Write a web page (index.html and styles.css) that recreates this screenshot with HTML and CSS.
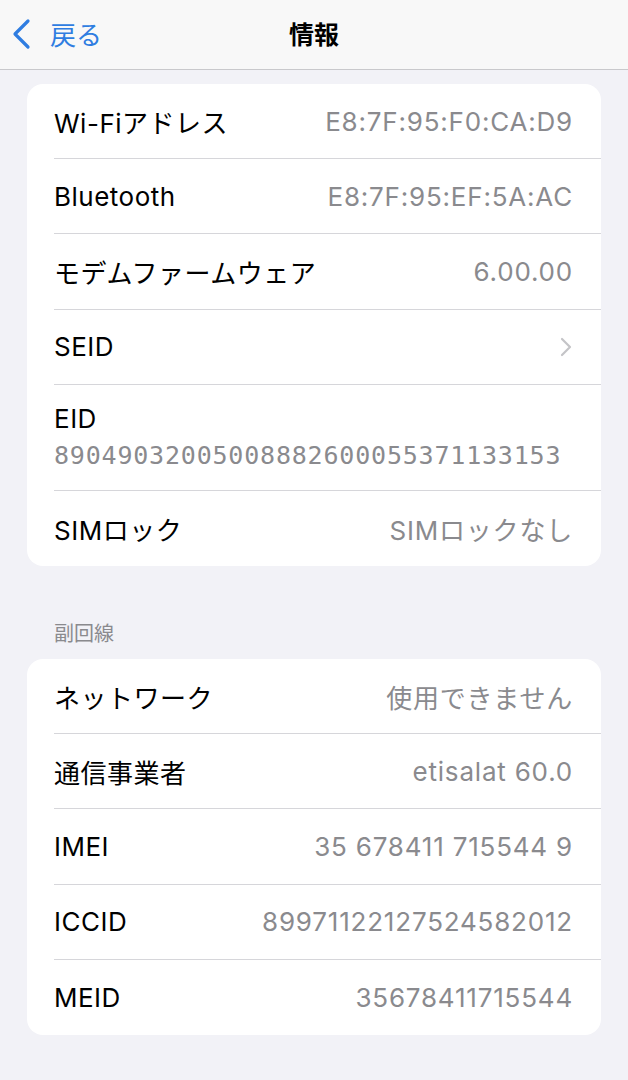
FILE: index.html
```html
<!DOCTYPE html>
<html lang="ja">
<head>
    <meta charset="UTF-8">
    <meta name="viewport" content="width=device-width, initial-scale=1.0">
    <title>情報</title>
    <link rel="stylesheet" href="styles.css">
</head>
<body>
    <div class="navbar">
        <div class="back">
            <svg class="back-icon" width="22" height="32" viewBox="0 0 22 32">
                <path d="M17 3 L4 16 L17 29" fill="none" stroke="#2f7de1" stroke-width="3.2" stroke-linecap="round" stroke-linejoin="round"/>
            </svg>
            <span>戻る</span>
        </div>
        <div class="title">情報</div>
    </div>

    <div class="content">
        <div class="card">
            <div class="row"><div class="row-inner"><span class="label">Wi-Fiアドレス</span><span class="value">E8:7F:95:F0:CA:D9</span></div></div>
            <div class="row"><div class="row-inner"><span class="label">Bluetooth</span><span class="value">E8:7F:95:EF:5A:AC</span></div></div>
            <div class="row"><div class="row-inner"><span class="label">モデムファームウェア</span><span class="value">6.00.00</span></div></div>
            <div class="row"><div class="row-inner"><span class="label">SEID</span>
                <svg class="chevron" width="12" height="20" viewBox="0 0 12 20"><path d="M2 2 L10 10 L2 18" fill="none" stroke="#c4c4c7" stroke-width="2.2" stroke-linecap="round" stroke-linejoin="round"/></svg>
            </div></div>
            <div class="row"><div class="row-inner stacked"><span class="label">EID</span><span class="value mono">89049032005008882600055371133153</span></div></div>
            <div class="row"><div class="row-inner"><span class="label">SIMロック</span><span class="value">SIMロックなし</span></div></div>
        </div>

        <div class="section-header">副回線</div>

        <div class="card">
            <div class="row"><div class="row-inner"><span class="label">ネットワーク</span><span class="value">使用できません</span></div></div>
            <div class="row"><div class="row-inner"><span class="label">通信事業者</span><span class="value">etisalat 60.0</span></div></div>
            <div class="row"><div class="row-inner"><span class="label">IMEI</span><span class="value">35 678411 715544 9</span></div></div>
            <div class="row"><div class="row-inner"><span class="label">ICCID</span><span class="value">89971122127524582012</span></div></div>
            <div class="row"><div class="row-inner"><span class="label">MEID</span><span class="value">35678411715544</span></div></div>
        </div>
    </div>
</body>
</html>
```

FILE: styles.css
```css
body {
    margin: 0;
    background-color: #f2f2f7;
    font-family: Inter, "Noto Sans CJK JP", sans-serif;
    color: #000;
}
.navbar {
    height: 70px;
    padding-bottom: 4px;
    box-sizing: border-box;
    background-color: #f8f8f8;
    border-bottom: 1px solid #c9c9cc;
    display: flex;
    align-items: center;
    justify-content: center;
    position: relative;
}
.back {
    position: absolute;
    left: 11px;
    top: 15px;
    display: flex;
    align-items: center;
    gap: 17px;
    color: #2f7de1;
    font-size: 26px;
}
.back-icon {
    display: block;
}
.title {
    font-size: 25px;
    font-weight: bold;
}
.content {
    padding: 14px 27px 40px;
}
.card {
    background-color: #fff;
    border-radius: 16px;
    overflow: hidden;
}
.row {
    padding-left: 27px;
}
.row-inner {
    min-height: 75.2px;
    padding-right: 28px;
    display: flex;
    align-items: center;
    justify-content: space-between;
    border-bottom: 1px solid #d6d6da;
    box-sizing: border-box;
}
.row:last-child .row-inner {
    border-bottom: none;
}
.row-inner.stacked {
    flex-direction: column;
    align-items: flex-start;
    justify-content: center;
    min-height: 106px;
    gap: 7px;
    padding-bottom: 2px;
}
.label {
    font-size: 26px;
    letter-spacing: 0.5px;
}
.value {
    font-size: 26px;
    letter-spacing: 0.8px;
    color: #8a8a8e;
}
.value.mono {
    font-family: "DejaVu Sans Mono", monospace;
    font-size: 25px;
    letter-spacing: 0.8px;
}
.chevron {
    display: block;
    margin-right: 1px;
}
.section-header {
    padding: 56px 0 13px 27px;
    font-size: 20px;
    line-height: 24px;
    color: #8a8a8e;
}
```
